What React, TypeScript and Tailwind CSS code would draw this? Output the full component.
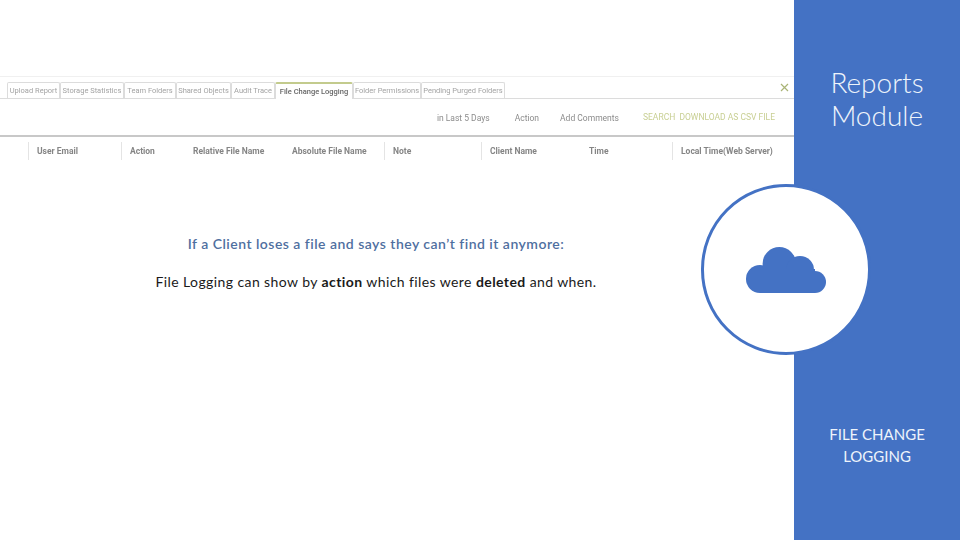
const tabs = [
  { label: "Upload Report", width: "w-[53px]" },
  { label: "Storage Statistics", width: "w-[64px]" },
  { label: "Team Folders", width: "w-[52px]" },
  { label: "Shared Objects", width: "w-[55px]" },
  { label: "Audit Trace", width: "w-[44px]" },
  { label: "File Change Logging", width: "w-[78px]", active: true },
  { label: "Folder Permissions", width: "w-[68px]" },
  { label: "Pending Purged Folders", width: "w-[84px]" },
]

const columns = [
  { label: "User Email", width: "w-[93px]" },
  { label: "Action", width: "w-[63px]" },
  { label: "Relative File Name", width: "w-[99px]", open: true },
  { label: "Absolute File Name", width: "w-[101px]", open: true },
  { label: "Note", width: "w-[97px]" },
  { label: "Client Name", width: "w-[99px]" },
  { label: "Time", width: "w-[92px]", open: true },
  { label: "Local Time(Web Server)", width: "w-[110px]" },
]

function ReportStrip() {
  return (
    <div className="h-[88px] w-full border-t border-[#f0f0f0] font-['Roboto',sans-serif] blur-[0.45px]">
      <div className="relative flex h-[22px] items-end border-b border-[#dcdcdc] pl-[7px]">
        {tabs.map((t) =>
          t.active ? (
            <div
              key={t.label}
              className={`${t.width} -mb-px flex h-[17px] items-center justify-center whitespace-nowrap rounded-t-[2px] border-x border-t-2 border-x-[#dcdcdc] border-t-[#c3cb8d] bg-white text-[7.5px] font-medium text-[#666]`}
            >
              {t.label}
            </div>
          ) : (
            <div
              key={t.label}
              className={`${t.width} flex h-[16px] items-center justify-center whitespace-nowrap rounded-t-[2px] border-x border-t border-[#dcdcdc] text-[7.5px] text-[#a3a3a3]`}
            >
              {t.label}
            </div>
          ),
        )}
        <svg className="absolute right-[5px] top-[6px] h-[9px] w-[9px]" viewBox="0 0 9 9" fill="none" stroke="#aab477" strokeWidth="1.2">
          <path d="M1 1l7 7M8 1L1 8" />
        </svg>
      </div>
      <div className="flex h-[38px] items-center justify-end border-b-2 border-[#c8c8c8] pr-[19px] pt-[3px] text-[8.5px] text-[#8c8c8c]">
        <span className="mr-[25px]">in Last 5 Days</span>
        <span className="mr-[21px]">Action</span>
        <span className="mr-[24px]">Add Comments</span>
        <span className="-translate-y-px text-[#c8cf93]">SEARCH&nbsp; DOWNLOAD AS CSV FILE</span>
      </div>
      <div className="flex h-[27px] items-center pl-[28px] pt-px text-[8.5px] font-bold text-[#858585]">
        {columns.map((c) => (
          <div
            key={c.label}
            className={`${c.width} flex h-[18px] items-center whitespace-nowrap pl-[8px] ${c.open ? "border-l border-transparent" : "border-l border-[#e4e4e4]"}`}
          >
            {c.label}
          </div>
        ))}
      </div>
    </div>
  )
}

function CloudBadge() {
  return (
    <div className="absolute left-[701px] top-[184px] flex h-[171px] w-[170px] items-center justify-center rounded-full border-[3px] border-[#4472c4] bg-white">
      <svg className="h-[46px] w-[80px]" viewBox="0 0 80 46" fill="#4472c4">
        <circle cx="14" cy="32" r="14" />
        <circle cx="33.300" cy="16.700" r="16.700" />
        <circle cx="54" cy="23" r="14" />
        <circle cx="69" cy="35" r="11" />
        <rect x="14" y="22" width="55" height="24" />
      </svg>
    </div>
  )
}

export default function App() {
  return (
    <div className="relative flex h-[540px] w-[960px] overflow-hidden bg-white font-['Lato',sans-serif]">
      <main className="flex w-[794px] flex-col items-stretch pt-[76px]">
        <ReportStrip />
        <div className="flex flex-col items-center pr-[42px] pt-[70px] text-[14px] leading-[20px]">
          <p className="font-semibold tracking-[0.48px] text-[#4f6f9f]">If a Client loses a file and says they can’t find it anymore:</p>
          <p className="mt-[18px] tracking-[0.41px] text-[#1a1a1a]">
            File Logging can show by <b>action</b> which files were <b>deleted</b> and when.
          </p>
        </div>
      </main>
      <aside className="flex w-[166px] flex-col items-center bg-[#4472c4] pt-[66px] text-center text-[#eef4fb]">
        <h1 className="text-[28px] font-light leading-[33px]">
          Reports
          <br />
          Module
        </h1>
        <p className="mt-[291px] text-[15px] leading-[22px]">
          FILE CHANGE
          <br />
          LOGGING
        </p>
      </aside>
      <CloudBadge />
    </div>
  )
}
